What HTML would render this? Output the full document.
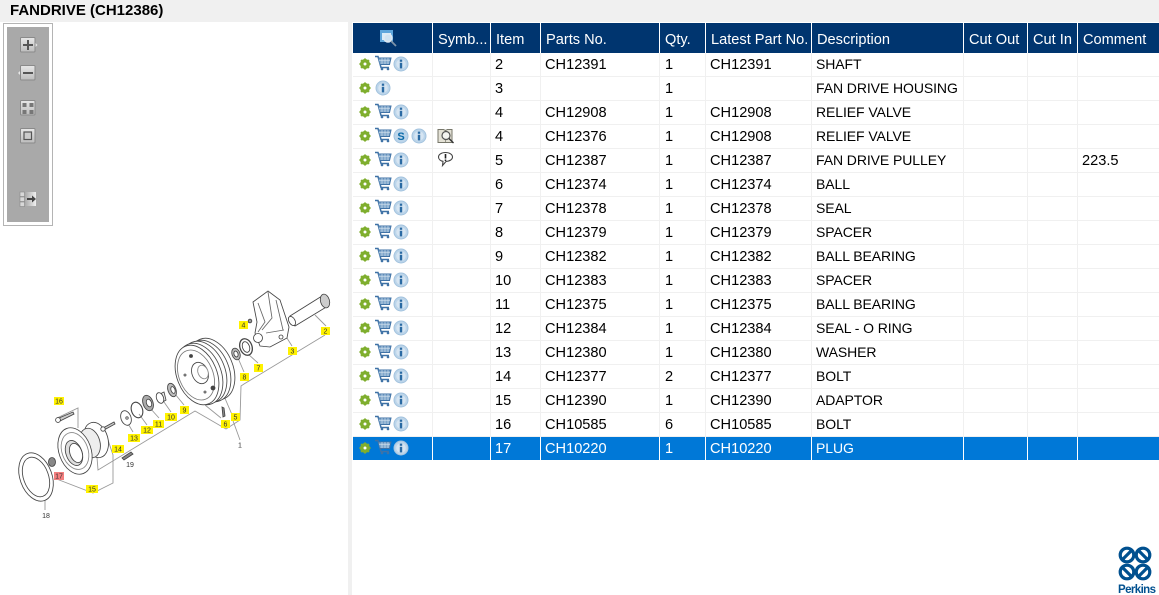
<!DOCTYPE html>
<html><head><meta charset="utf-8">
<style>
html,body{margin:0;padding:0;width:1159px;height:595px;overflow:hidden;background:#fff;font-family:"Liberation Sans",sans-serif;color:#000}
#title{position:absolute;left:0;top:0;width:1159px;height:22px;background:#f0f0f0;font:bold 15px/21px "Liberation Sans",sans-serif;color:#000;padding-left:10px;box-sizing:border-box}
#split{position:absolute;left:348px;top:22px;width:4px;height:573px;background:#f0f0f0}
#tb{position:absolute;left:3px;top:23px;width:50px;height:203px;box-sizing:border-box;border:1px solid #b4b4b4;background:#fff}
#tbi{position:absolute;left:3px;top:3px;width:42px;height:195px;background:#a9a9a9}
#hd{position:absolute;left:353px;top:23px;width:806px;height:30px;background:#00356f}
.h{position:absolute;top:0;height:30px;font-size:14.6px;line-height:34px;color:#fff;white-space:nowrap}
.hs{position:absolute;top:0;width:1px;height:30px;background:#fff}
.r{position:absolute;left:353px;width:806px;height:24px}
.r .l{position:absolute;left:0;right:0;bottom:0;height:1px;background:#f0f0f0}
.c{position:absolute;top:0;height:24px;line-height:24px;font-size:14.6px;white-space:nowrap}
.s{position:absolute;top:0;height:24px;width:1px;background:#f0f0f0}
.sel{background:#0078d7;color:#fff}
.sel .l{display:none}
.sel .s{background:#fff;height:23px}
svg{position:absolute;overflow:visible}
.x1{left:142px}.x2{left:192px}.x3{left:312px}.x4{left:357px}.x5{left:463px;font-size:14px;line-height:23px;letter-spacing:-.08px}.x6{left:729px}
#dr{filter:blur(.35px)}
</style></head><body>
<svg width="0" height="0" style="left:0;top:0"><defs>
<g id="gear"><circle cx="0" cy="0" r="3.600" fill="none" stroke="#7fae2e" stroke-width="2.800"/><g stroke="#7fae2e" stroke-width="2"><path d="M0-5.500V5.500M-5.500 0H5.500M-3.900-3.900L3.900 3.900M-3.900 3.900L3.900-3.900"/></g><circle r="1.500" fill="#fff"/></g>
<g id="cart" fill="none" stroke="#3f72a6"><path d="M-8-6.500H-5L-2 4.500H6" stroke-width="1.500"/><path d="M-4.500-5H8L6.500 1.500H-3" fill="#7fa6cb" stroke-width="1"/><path d="M-1-5V1M2-5V1M5-5V1M-4-2.500H7" stroke="#dbe7f2" stroke-width=".6"/><circle cx="-1" cy="6" r="1.300" fill="#3f72a6" stroke="none"/><circle cx="5" cy="6" r="1.300" fill="#3f72a6" stroke="none"/></g>
<g id="info"><circle r="7" fill="#bcd5ea" stroke="#a3c3de"/><circle r="4.800" fill="#d6e5f2" stroke="none"/><rect x="-1.200" y="-1.200" width="2.400" height="5.600" fill="#2a6aa3"/><rect x="-1.200" y="-4.400" width="2.400" height="2.200" fill="#2a6aa3"/></g>
</defs></svg>

<div id="title">FANDRIVE (CH12386)</div>
<div id="split"></div>
<div id="tb"><div id="tbi"></div></div>

<svg style="left:0;top:0" width="60" height="230">
<defs><linearGradient id="btn" x1="0" y1="0" x2="0" y2="1"><stop offset="0" stop-color="#e8e8e8"/><stop offset="1" stop-color="#bcbcbc"/></linearGradient><linearGradient id="fade" x1="0" y1="0" x2="1" y2="0"><stop offset="0" stop-color="#a9a9a9"/><stop offset="1" stop-color="#f0f0f0"/></linearGradient></defs>
<g stroke="#8a8a8a" fill="url(#btn)">
<rect x="20.500" y="37.500" width="14.500" height="14.500" rx="1"/><rect x="20.500" y="65.500" width="14.500" height="14.500" rx="1"/><rect x="20.500" y="100.500" width="14.500" height="14.500" rx="1"/><rect x="20.500" y="128.500" width="14.500" height="14.500" rx="1"/>
</g>
<path d="M35.500 43l2 2-2 2zM20 71l-2 2 2 2z" fill="#e8e8e8"/>
<path d="M28 40v10M23 45h10M23 73h10" stroke="#555" stroke-width="2" fill="none"/>
<g fill="#777"><rect x="22.500" y="103" width="4" height="4"/><rect x="29.500" y="103" width="4" height="4"/><rect x="22.500" y="110" width="4" height="4"/><rect x="29.500" y="110" width="4" height="4"/></g>
<rect x="24" y="132" width="7.500" height="7.500" fill="#ccc" stroke="#555" stroke-width="1.200"/>
<g fill="#d8d8d8" stroke="#888" stroke-width=".6"><rect x="20" y="192" width="4.500" height="4.500"/><rect x="20" y="197" width="4.500" height="4.500"/><rect x="20" y="202" width="4.500" height="4.500"/></g>
<rect x="25" y="192" width="11" height="14" fill="url(#fade)"/>
<path d="M27 199h6" stroke="#444" stroke-width="2"/><path d="M32 195.500l4 3.500-4 3.500z" fill="#444"/>
</svg>

<!-- exploded drawing -->
<svg id="dr" style="left:0;top:0" width="348" height="595">
<g fill="none" stroke="#999" stroke-width=".9">
<path d="M325 335L244 384 241 386 240 420 226 429 195 411 98 470 97 457"/>
<path d="M54 478L93 493 113 483 113 455 104 428"/>
<path d="M57 418L78 408 78 428M221 418L205 405M233 417L224 396M258 363L248 354M292 346L285 335M326 326L315 315M245 325L250 321M240 440L232 418M45 510L45 500M133 432L127 422M147 425L139 414M159 418L150 408M171 412L164 402M184 405L175 394M244 372L238 358"/>
</g>
<g fill="#fff" stroke="#444" stroke-width=".85">
<!-- shaft -->
<path d="M290 316L322 296 328 306 295 326Z"/>
<ellipse cx="325" cy="301" rx="4.500" ry="7" transform="rotate(-15 325 301)" fill="#ccc"/>
<ellipse cx="292" cy="321" rx="3" ry="5" transform="rotate(-30 292 321)"/>
<!-- housing -->
<path d="M253 302L268 291 280 300 289 327 287 338 270 347 260 346 255 333 257 322Z"/>
<path d="M258 303L265 322 258 332M268 292L272 318 262 330M266 333L284 330M276 300L283 330" stroke="#666"/>
<circle cx="258" cy="338" r="4.500"/>
<circle cx="281" cy="337" r="2"/>
<circle cx="250" cy="321" r="1.800" fill="#999"/>
<!-- seals -->
<ellipse cx="246" cy="347" rx="6" ry="8.500" transform="rotate(-20 246 347)" stroke-width="1.300"/>
<ellipse cx="246" cy="347" rx="3.500" ry="5.500" transform="rotate(-20 246 347)"/>
<ellipse cx="236" cy="354" rx="4" ry="6" transform="rotate(-20 236 354)" fill="#bbb"/>
<ellipse cx="236" cy="354" rx="2" ry="3" transform="rotate(-20 236 354)"/>
<!-- pulley -->
<ellipse cx="212" cy="369" rx="21" ry="32" transform="rotate(-22 212 369)"/>
<ellipse cx="208" cy="371" rx="21" ry="32" transform="rotate(-22 208 371)"/>
<ellipse cx="204" cy="372" rx="21" ry="32" transform="rotate(-22 204 372)"/>
<ellipse cx="200" cy="374" rx="21" ry="32" transform="rotate(-22 200 374)"/>
<ellipse cx="197" cy="375" rx="20" ry="31" transform="rotate(-22 197 375)"/>
<ellipse cx="196" cy="375" rx="17" ry="26" transform="rotate(-22 196 375)" stroke="#777"/>
<ellipse cx="200" cy="373" rx="8" ry="11" transform="rotate(-22 200 373)"/>
<ellipse cx="203" cy="372" rx="5" ry="7" transform="rotate(-22 203 372)" stroke="#888"/>
<circle cx="191" cy="356" r="1.500" fill="#444"/><circle cx="213" cy="388" r="2" fill="#444"/><circle cx="185" cy="375" r="1"/><circle cx="205" cy="392" r="1"/>
<!-- bearing stack -->
<ellipse cx="172" cy="390" rx="4" ry="7" transform="rotate(-20 172 390)" fill="#bbb"/><ellipse cx="173" cy="390" rx="2" ry="3.500" transform="rotate(-20 173 390)"/>
<path d="M158 395l6-3 2 8-5 3z" fill="#eee"/><ellipse cx="160" cy="398" rx="3.500" ry="5.500" transform="rotate(-20 160 398)"/>
<ellipse cx="148" cy="403" rx="5" ry="8" transform="rotate(-20 148 403)" fill="#aaa"/><ellipse cx="149" cy="403" rx="2.500" ry="4" transform="rotate(-20 149 403)"/>
<ellipse cx="137" cy="410" rx="5.500" ry="8" transform="rotate(-20 137 410)" fill="none" stroke-width="1.100"/>
<ellipse cx="126" cy="418" rx="5" ry="7.500" transform="rotate(-20 126 418)"/><circle cx="127" cy="418" r="1.200"/>
<!-- hub -->
<ellipse cx="96" cy="440" rx="12" ry="18" transform="rotate(-15 96 440)"/>
<ellipse cx="90" cy="443" rx="10" ry="15" transform="rotate(-15 90 443)" fill="#eee"/>
<ellipse cx="75" cy="451" rx="16" ry="24" transform="rotate(-20 75 451)"/>
<ellipse cx="75" cy="451" rx="13" ry="19" transform="rotate(-20 75 451)" stroke="#888"/>
<ellipse cx="74" cy="453" rx="8" ry="13" transform="rotate(-20 74 453)" fill="#ddd"/>
<ellipse cx="76" cy="453" rx="6" ry="10" transform="rotate(-20 76 453)"/>
<!-- gasket -->
<ellipse cx="36" cy="477" rx="16" ry="25" transform="rotate(-20 36 477)"/>
<ellipse cx="36" cy="477" rx="12.500" ry="20.500" transform="rotate(-20 36 477)"/>
<!-- plug & bolts -->
<ellipse cx="52" cy="462" rx="3.500" ry="4.500" fill="#888"/>
<path d="M59 418L73 412 74 414 60 421Z" fill="#ccc"/><circle cx="58" cy="420" r="2.400"/>
<path d="M103 428L114 422 115 424 104 430Z" fill="#ccc"/><circle cx="103" cy="429" r="2.200"/>
<path d="M122 458L131 452 133 454 124 460Z" fill="#888"/>
<path d="M222 407l2 1 1 8-2 1z" fill="#888"/>
</g>
<g font-family="Liberation Sans,sans-serif" font-size="7" text-anchor="middle" fill="#333">
<g fill="#fff200" stroke="none">
<rect x="321" y="327" width="9" height="8"/><rect x="288" y="347" width="9" height="8"/><rect x="239" y="321" width="9" height="8"/><rect x="231" y="413" width="9" height="8"/><rect x="221" y="420" width="9" height="8"/><rect x="254" y="364" width="9" height="8"/><rect x="240" y="373" width="9" height="8"/><rect x="180" y="406" width="9" height="8"/>
<rect x="165" y="413" width="12" height="8"/><rect x="153" y="420" width="11" height="8"/><rect x="141" y="426" width="12" height="8"/><rect x="128" y="434" width="12" height="8"/><rect x="112" y="445" width="12" height="8"/><rect x="86" y="485" width="12" height="8"/><rect x="54" y="397" width="10" height="8"/>
</g>
<rect x="54" y="472" width="10" height="8" fill="#f47f7f"/>
<text x="325.500" y="333.500">2</text><text x="292.500" y="353.500">3</text><text x="243.500" y="327.500">4</text><text x="235.500" y="419.500">5</text><text x="225.500" y="426.500">6</text><text x="258.500" y="370.500">7</text><text x="244.500" y="379.500">8</text><text x="184.500" y="412.500">9</text><text x="171" y="419.500">10</text><text x="158.500" y="426.500">11</text><text x="147" y="432.500">12</text><text x="134" y="440.500">13</text><text x="118" y="451.500">14</text><text x="92" y="491.500">15</text><text x="59" y="403.500">16</text><text x="59" y="478.500">17</text><text x="46" y="518">18</text><text x="130" y="467">19</text><text x="240" y="447.500">1</text>
</g>
</svg>

<!-- table header -->
<div id="hd">
<span class="h" style="left:85px">Symb...</span><span class="h" style="left:143px">Item</span><span class="h" style="left:193px">Parts No.</span><span class="h" style="left:312px">Qty.</span><span class="h" style="left:358px">Latest Part No.</span><span class="h" style="left:464px">Description</span><span class="h" style="left:616px">Cut Out</span><span class="h" style="left:680px">Cut In</span><span class="h" style="left:730px">Comment</span>
<i class="hs" style="left:79px"></i><i class="hs" style="left:137px"></i><i class="hs" style="left:187px"></i><i class="hs" style="left:306px"></i><i class="hs" style="left:352px"></i><i class="hs" style="left:458px"></i><i class="hs" style="left:610px"></i><i class="hs" style="left:674px"></i><i class="hs" style="left:724px"></i>
<svg style="left:27px;top:7px" width="18" height="18"><rect x="0" y="0" width="13" height="12" fill="#5ea6dc"/><rect x="2" y="3" width="9" height="7" fill="#d9ecf9"/><circle cx="8" cy="8" r="4" fill="#cfe3f2" stroke="#dfe9f2" stroke-width="1.400"/><path d="M11 11l5 5" stroke="#7d93a8" stroke-width="1.800"/></svg>
</div>

<!-- rows -->
<div class="r" style="top:53px"><div class="l"></div><i class="s" style="left:79px"></i><i class="s" style="left:137px"></i><i class="s" style="left:187px"></i><i class="s" style="left:306px"></i><i class="s" style="left:352px"></i><i class="s" style="left:458px"></i><i class="s" style="left:610px"></i><i class="s" style="left:674px"></i><i class="s" style="left:724px"></i><span class="c x1">2</span><span class="c x2">CH12391</span><span class="c x3">1</span><span class="c x4">CH12391</span><span class="c x5">SHAFT</span><svg style="left:0;top:0" width="70" height="24"><use href="#gear" x="12" y="11"/><use href="#cart" x="30" y="10"/><use href="#info" x="48" y="11"/></svg></div>
<div class="r" style="top:77px"><div class="l"></div><i class="s" style="left:79px"></i><i class="s" style="left:137px"></i><i class="s" style="left:187px"></i><i class="s" style="left:306px"></i><i class="s" style="left:352px"></i><i class="s" style="left:458px"></i><i class="s" style="left:610px"></i><i class="s" style="left:674px"></i><i class="s" style="left:724px"></i><span class="c x1">3</span><span class="c x3">1</span><span class="c x5">FAN DRIVE HOUSING</span><svg style="left:0;top:0" width="70" height="24"><use href="#gear" x="12" y="11"/><use href="#info" x="30" y="11"/></svg></div>
<div class="r" style="top:101px"><div class="l"></div><i class="s" style="left:79px"></i><i class="s" style="left:137px"></i><i class="s" style="left:187px"></i><i class="s" style="left:306px"></i><i class="s" style="left:352px"></i><i class="s" style="left:458px"></i><i class="s" style="left:610px"></i><i class="s" style="left:674px"></i><i class="s" style="left:724px"></i><span class="c x1">4</span><span class="c x2">CH12908</span><span class="c x3">1</span><span class="c x4">CH12908</span><span class="c x5">RELIEF VALVE</span><svg style="left:0;top:0" width="70" height="24"><use href="#gear" x="12" y="11"/><use href="#cart" x="30" y="10"/><use href="#info" x="48" y="11"/></svg></div>
<div class="r" style="top:125px"><div class="l"></div><i class="s" style="left:79px"></i><i class="s" style="left:137px"></i><i class="s" style="left:187px"></i><i class="s" style="left:306px"></i><i class="s" style="left:352px"></i><i class="s" style="left:458px"></i><i class="s" style="left:610px"></i><i class="s" style="left:674px"></i><i class="s" style="left:724px"></i><span class="c x1">4</span><span class="c x2">CH12376</span><span class="c x3">1</span><span class="c x4">CH12908</span><span class="c x5">RELIEF VALVE</span><svg style="left:0;top:0" width="110" height="24"><use href="#gear" x="12" y="11"/><use href="#cart" x="30" y="10"/><circle cx="48" cy="11" r="7" fill="#bcd5ea" stroke="#a3c3de"/><text x="48" y="15" font-family="Liberation Sans,sans-serif" font-size="11" font-weight="bold" text-anchor="middle" fill="#0b6aa8">S</text><use href="#info" x="66" y="11"/><g fill="none" stroke="#77776a"><path d="M85 4.500h5.500l2 1 2-1H99v13H85z" fill="#e4e2d6" stroke-width="1"/><path d="M92.500 5.500v12" stroke-width=".7"/><circle cx="93" cy="10.500" r="4" fill="#f4f4f0" stroke="#555" stroke-width="1.200"/><path d="M96 13.500l4.500 4.500" stroke="#333" stroke-width="1.400"/></g></svg></div>
<div class="r" style="top:149px"><div class="l"></div><i class="s" style="left:79px"></i><i class="s" style="left:137px"></i><i class="s" style="left:187px"></i><i class="s" style="left:306px"></i><i class="s" style="left:352px"></i><i class="s" style="left:458px"></i><i class="s" style="left:610px"></i><i class="s" style="left:674px"></i><i class="s" style="left:724px"></i><span class="c x1">5</span><span class="c x2">CH12387</span><span class="c x3">1</span><span class="c x4">CH12387</span><span class="c x5">FAN DRIVE PULLEY</span><span class="c x6">223.5</span><svg style="left:0;top:0" width="110" height="24"><use href="#gear" x="12" y="11"/><use href="#cart" x="30" y="10"/><use href="#info" x="48" y="11"/><path d="M92.500 3.500c-4 0-7 2-7 4.500 0 2.200 2 3.800 4.500 4.300l-.5 4.200 3.500-4c3.500-.2 6.500-2 6.500-4.500s-3-4.500-7-4.500z" fill="#fff" stroke="#444" stroke-width="1.100"/><path d="M92.500 5v4.500M92.500 10.500v1.500" stroke="#222" stroke-width="1.600"/></svg></div>
<div class="r" style="top:173px"><div class="l"></div><i class="s" style="left:79px"></i><i class="s" style="left:137px"></i><i class="s" style="left:187px"></i><i class="s" style="left:306px"></i><i class="s" style="left:352px"></i><i class="s" style="left:458px"></i><i class="s" style="left:610px"></i><i class="s" style="left:674px"></i><i class="s" style="left:724px"></i><span class="c x1">6</span><span class="c x2">CH12374</span><span class="c x3">1</span><span class="c x4">CH12374</span><span class="c x5">BALL</span><svg style="left:0;top:0" width="70" height="24"><use href="#gear" x="12" y="11"/><use href="#cart" x="30" y="10"/><use href="#info" x="48" y="11"/></svg></div>
<div class="r" style="top:197px"><div class="l"></div><i class="s" style="left:79px"></i><i class="s" style="left:137px"></i><i class="s" style="left:187px"></i><i class="s" style="left:306px"></i><i class="s" style="left:352px"></i><i class="s" style="left:458px"></i><i class="s" style="left:610px"></i><i class="s" style="left:674px"></i><i class="s" style="left:724px"></i><span class="c x1">7</span><span class="c x2">CH12378</span><span class="c x3">1</span><span class="c x4">CH12378</span><span class="c x5">SEAL</span><svg style="left:0;top:0" width="70" height="24"><use href="#gear" x="12" y="11"/><use href="#cart" x="30" y="10"/><use href="#info" x="48" y="11"/></svg></div>
<div class="r" style="top:221px"><div class="l"></div><i class="s" style="left:79px"></i><i class="s" style="left:137px"></i><i class="s" style="left:187px"></i><i class="s" style="left:306px"></i><i class="s" style="left:352px"></i><i class="s" style="left:458px"></i><i class="s" style="left:610px"></i><i class="s" style="left:674px"></i><i class="s" style="left:724px"></i><span class="c x1">8</span><span class="c x2">CH12379</span><span class="c x3">1</span><span class="c x4">CH12379</span><span class="c x5">SPACER</span><svg style="left:0;top:0" width="70" height="24"><use href="#gear" x="12" y="11"/><use href="#cart" x="30" y="10"/><use href="#info" x="48" y="11"/></svg></div>
<div class="r" style="top:245px"><div class="l"></div><i class="s" style="left:79px"></i><i class="s" style="left:137px"></i><i class="s" style="left:187px"></i><i class="s" style="left:306px"></i><i class="s" style="left:352px"></i><i class="s" style="left:458px"></i><i class="s" style="left:610px"></i><i class="s" style="left:674px"></i><i class="s" style="left:724px"></i><span class="c x1">9</span><span class="c x2">CH12382</span><span class="c x3">1</span><span class="c x4">CH12382</span><span class="c x5">BALL BEARING</span><svg style="left:0;top:0" width="70" height="24"><use href="#gear" x="12" y="11"/><use href="#cart" x="30" y="10"/><use href="#info" x="48" y="11"/></svg></div>
<div class="r" style="top:269px"><div class="l"></div><i class="s" style="left:79px"></i><i class="s" style="left:137px"></i><i class="s" style="left:187px"></i><i class="s" style="left:306px"></i><i class="s" style="left:352px"></i><i class="s" style="left:458px"></i><i class="s" style="left:610px"></i><i class="s" style="left:674px"></i><i class="s" style="left:724px"></i><span class="c x1">10</span><span class="c x2">CH12383</span><span class="c x3">1</span><span class="c x4">CH12383</span><span class="c x5">SPACER</span><svg style="left:0;top:0" width="70" height="24"><use href="#gear" x="12" y="11"/><use href="#cart" x="30" y="10"/><use href="#info" x="48" y="11"/></svg></div>
<div class="r" style="top:293px"><div class="l"></div><i class="s" style="left:79px"></i><i class="s" style="left:137px"></i><i class="s" style="left:187px"></i><i class="s" style="left:306px"></i><i class="s" style="left:352px"></i><i class="s" style="left:458px"></i><i class="s" style="left:610px"></i><i class="s" style="left:674px"></i><i class="s" style="left:724px"></i><span class="c x1">11</span><span class="c x2">CH12375</span><span class="c x3">1</span><span class="c x4">CH12375</span><span class="c x5">BALL BEARING</span><svg style="left:0;top:0" width="70" height="24"><use href="#gear" x="12" y="11"/><use href="#cart" x="30" y="10"/><use href="#info" x="48" y="11"/></svg></div>
<div class="r" style="top:317px"><div class="l"></div><i class="s" style="left:79px"></i><i class="s" style="left:137px"></i><i class="s" style="left:187px"></i><i class="s" style="left:306px"></i><i class="s" style="left:352px"></i><i class="s" style="left:458px"></i><i class="s" style="left:610px"></i><i class="s" style="left:674px"></i><i class="s" style="left:724px"></i><span class="c x1">12</span><span class="c x2">CH12384</span><span class="c x3">1</span><span class="c x4">CH12384</span><span class="c x5">SEAL - O RING</span><svg style="left:0;top:0" width="70" height="24"><use href="#gear" x="12" y="11"/><use href="#cart" x="30" y="10"/><use href="#info" x="48" y="11"/></svg></div>
<div class="r" style="top:341px"><div class="l"></div><i class="s" style="left:79px"></i><i class="s" style="left:137px"></i><i class="s" style="left:187px"></i><i class="s" style="left:306px"></i><i class="s" style="left:352px"></i><i class="s" style="left:458px"></i><i class="s" style="left:610px"></i><i class="s" style="left:674px"></i><i class="s" style="left:724px"></i><span class="c x1">13</span><span class="c x2">CH12380</span><span class="c x3">1</span><span class="c x4">CH12380</span><span class="c x5">WASHER</span><svg style="left:0;top:0" width="70" height="24"><use href="#gear" x="12" y="11"/><use href="#cart" x="30" y="10"/><use href="#info" x="48" y="11"/></svg></div>
<div class="r" style="top:365px"><div class="l"></div><i class="s" style="left:79px"></i><i class="s" style="left:137px"></i><i class="s" style="left:187px"></i><i class="s" style="left:306px"></i><i class="s" style="left:352px"></i><i class="s" style="left:458px"></i><i class="s" style="left:610px"></i><i class="s" style="left:674px"></i><i class="s" style="left:724px"></i><span class="c x1">14</span><span class="c x2">CH12377</span><span class="c x3">2</span><span class="c x4">CH12377</span><span class="c x5">BOLT</span><svg style="left:0;top:0" width="70" height="24"><use href="#gear" x="12" y="11"/><use href="#cart" x="30" y="10"/><use href="#info" x="48" y="11"/></svg></div>
<div class="r" style="top:389px"><div class="l"></div><i class="s" style="left:79px"></i><i class="s" style="left:137px"></i><i class="s" style="left:187px"></i><i class="s" style="left:306px"></i><i class="s" style="left:352px"></i><i class="s" style="left:458px"></i><i class="s" style="left:610px"></i><i class="s" style="left:674px"></i><i class="s" style="left:724px"></i><span class="c x1">15</span><span class="c x2">CH12390</span><span class="c x3">1</span><span class="c x4">CH12390</span><span class="c x5">ADAPTOR</span><svg style="left:0;top:0" width="70" height="24"><use href="#gear" x="12" y="11"/><use href="#cart" x="30" y="10"/><use href="#info" x="48" y="11"/></svg></div>
<div class="r" style="top:413px"><div class="l"></div><i class="s" style="left:79px"></i><i class="s" style="left:137px"></i><i class="s" style="left:187px"></i><i class="s" style="left:306px"></i><i class="s" style="left:352px"></i><i class="s" style="left:458px"></i><i class="s" style="left:610px"></i><i class="s" style="left:674px"></i><i class="s" style="left:724px"></i><span class="c x1">16</span><span class="c x2">CH10585</span><span class="c x3">6</span><span class="c x4">CH10585</span><span class="c x5">BOLT</span><svg style="left:0;top:0" width="70" height="24"><use href="#gear" x="12" y="11"/><use href="#cart" x="30" y="10"/><use href="#info" x="48" y="11"/></svg></div>
<div class="r sel" style="top:437px;height:23px"><i class="s" style="left:79px"></i><i class="s" style="left:137px"></i><i class="s" style="left:187px"></i><i class="s" style="left:306px"></i><i class="s" style="left:352px"></i><i class="s" style="left:458px"></i><i class="s" style="left:610px"></i><i class="s" style="left:674px"></i><i class="s" style="left:724px"></i><span class="c x1">17</span><span class="c x2">CH10220</span><span class="c x3">1</span><span class="c x4">CH10220</span><span class="c x5">PLUG</span><svg style="left:0;top:0" width="70" height="24"><use href="#gear" x="12" y="11"/><use href="#cart" x="30" y="10"/><use href="#info" x="48" y="11"/></svg></div>

<!-- Perkins logo -->
<svg style="left:1110px;top:540px" width="49" height="55">
<g fill="none" stroke="#00508f" stroke-width="3.200">
<circle cx="17" cy="15" r="6.800"/><circle cx="33" cy="15" r="6.800"/><circle cx="17" cy="32" r="6.800"/><circle cx="33" cy="32" r="6.800"/>
<path d="M12 20L22 10M28 10L38 20M12 27L22 37M28 37L38 27"/>
</g>
<text x="8" y="53" font-family="Liberation Sans,sans-serif" font-size="11.500" font-weight="bold" fill="#00508f" textLength="38">Perkins</text>
</svg>
</body></html>
